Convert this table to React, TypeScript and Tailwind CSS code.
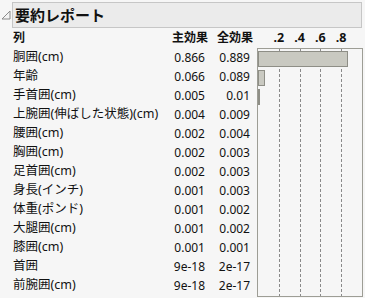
import React from 'react';

type Row = { label: string; main: number; mainText: string; totalText: string };

const rows: Row[] = [
  { label: '胴囲(cm)', main: 0.866, mainText: '0.866', totalText: '0.889' },
  { label: '年齢', main: 0.066, mainText: '0.066', totalText: '0.089' },
  { label: '手首囲(cm)', main: 0.005, mainText: '0.005', totalText: '0.01' },
  { label: '上腕囲(伸ばした状態)(cm)', main: 0.004, mainText: '0.004', totalText: '0.009' },
  { label: '腰囲(cm)', main: 0.002, mainText: '0.002', totalText: '0.004' },
  { label: '胸囲(cm)', main: 0.002, mainText: '0.002', totalText: '0.003' },
  { label: '足首囲(cm)', main: 0.002, mainText: '0.002', totalText: '0.003' },
  { label: '身長(インチ)', main: 0.001, mainText: '0.001', totalText: '0.003' },
  { label: '体重(ポンド)', main: 0.001, mainText: '0.001', totalText: '0.002' },
  { label: '大腿囲(cm)', main: 0.001, mainText: '0.001', totalText: '0.002' },
  { label: '膝囲(cm)', main: 0.001, mainText: '0.001', totalText: '0.001' },
  { label: '首囲', main: 9e-18, mainText: '9e-18', totalText: '2e-17' },
  { label: '前腕囲(cm)', main: 9e-18, mainText: '9e-18', totalText: '2e-17' },
];

const CHART_W = 104;
const ticks = [0.2, 0.4, 0.6, 0.8];

function Disclosure() {
  return (
    <svg width="10" height="10" viewBox="0 0 10 10" className="shrink-0">
      <polygon points="1,9 9,1 9,9" fill="#f4f4f4" stroke="#8a8a8a" strokeWidth="1" />
    </svg>
  );
}

export default function App() {
  return (
    <div
      className="w-[365px] h-[298px] bg-[#f6f6f6] text-[#111] overflow-hidden"
      style={{ fontFamily: '"Noto Sans", "Noto Sans CJK JP", sans-serif' }}
    >
      {/* タイトル */}
      <div className="flex items-center pt-[2px] pl-[1px] pr-[3px]">
        <Disclosure />
        <div className="ml-[1px] flex-1 h-[26px] bg-[#ebebeb] border border-[#c6c6c6] flex items-center pl-[2px]">
          <span className="text-[15px] font-bold leading-none">要約レポート</span>
        </div>
      </div>

      <div className="flex pl-[13px]">
        {/* 表 */}
        <div className="flex flex-col">
          <div className="flex items-center h-[20px] text-[12px] font-bold">
            <div className="w-[153px]">列</div>
            <div className="w-[42px] text-right">主効果</div>
            <div className="w-[45px] text-right">全効果</div>
          </div>
          {rows.map((r) => (
            <div key={r.label} className="flex items-center h-[19px] text-[12px] whitespace-nowrap">
              <div className="w-[153px] text-[12.5px]">{r.label}</div>
              <div className="w-[39px] text-right">{r.mainText}</div>
              <div className="w-[45px] text-right">{r.totalText}</div>
            </div>
          ))}
        </div>

        {/* グラフ */}
        <div className="ml-[4px] flex flex-col">
          <div className="relative h-[20px] w-[106px] text-[12.5px] font-bold">
            {ticks.map((t) => (
              <span
                key={t}
                className="absolute top-[1px] -translate-x-1/2"
                style={{ left: 1 + t * CHART_W }}
              >
                {'.' + Math.round(t * 10)}
              </span>
            ))}
          </div>
          <div className="relative w-[106px] border border-[#9d9d95] bg-[#f6f6f6]">
            {ticks.map((t) => (
              <div
                key={t}
                className="absolute top-0 bottom-0 w-px bg-[repeating-linear-gradient(to_bottom,#8a8a8a_0_3px,transparent_3px_5px)]"
                style={{ left: Math.round(t * CHART_W) - 0.5 }}
              />
            ))}
            {rows.map((r) => {
              const w = r.main * CHART_W;
              return (
                <div key={r.label} className="relative h-[19px] flex items-center">
                  {w >= 3 ? (
                    <div className="h-[16px] bg-[#c9c9c1] border border-[#8e8e86]" style={{ width: w }} />
                  ) : w >= 0.5 ? (
                    <div className="h-[16px] w-[2px] bg-[#8e8e86]" />
                  ) : null}
                </div>
              );
            })}
          </div>
        </div>
      </div>
    </div>
  );
}
